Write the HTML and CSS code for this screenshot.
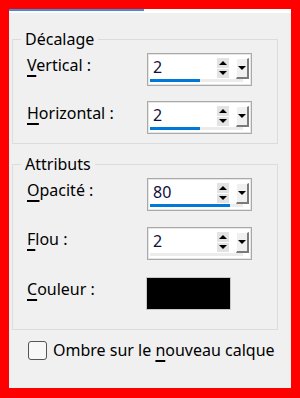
FILE: index.html
```html
<!DOCTYPE html>
<html lang="fr">
<head>
    <meta charset="UTF-8">
    <title>Ombre portée</title>
    <link rel="stylesheet" href="styles.css">
</head>
<body>
    <div class="window">
        <div class="tabline"><div class="tab-active"></div></div>

        <fieldset class="group group-offset">
            <legend>Décalage</legend>
            <div class="rows">
                <label class="row-label"><u>V</u>ertical :</label>
                <div class="spin">
                    <div class="spin-row">
                        <span class="spin-value">2</span>
                        <div class="spin-arrows">
                            <span class="arrow-btn"><span class="tri-up"></span></span>
                            <span class="arrow-btn"><span class="tri-down"></span></span>
                        </div>
                        <span class="drop-btn"><span class="tri-down"></span></span>
                    </div>
                    <div class="track"><div class="fill" style="width: 50px"></div></div>
                </div>

                <label class="row-label"><u>H</u>orizontal :</label>
                <div class="spin">
                    <div class="spin-row">
                        <span class="spin-value">2</span>
                        <div class="spin-arrows">
                            <span class="arrow-btn"><span class="tri-up"></span></span>
                            <span class="arrow-btn"><span class="tri-down"></span></span>
                        </div>
                        <span class="drop-btn"><span class="tri-down"></span></span>
                    </div>
                    <div class="track"><div class="fill" style="width: 50px"></div></div>
                </div>
            </div>
        </fieldset>

        <fieldset class="group group-attr">
            <legend>Attributs</legend>
            <div class="rows rows-attr">
                <label class="row-label"><u>O</u>pacité :</label>
                <div class="spin">
                    <div class="spin-row">
                        <span class="spin-value">80</span>
                        <div class="spin-arrows">
                            <span class="arrow-btn"><span class="tri-up"></span></span>
                            <span class="arrow-btn"><span class="tri-down"></span></span>
                        </div>
                        <span class="drop-btn"><span class="tri-down"></span></span>
                    </div>
                    <div class="track"><div class="fill" style="width: 80px"></div></div>
                </div>

                <label class="row-label"><u>F</u>lou :</label>
                <div class="spin">
                    <div class="spin-row">
                        <span class="spin-value">2</span>
                        <div class="spin-arrows">
                            <span class="arrow-btn"><span class="tri-up"></span></span>
                            <span class="arrow-btn"><span class="tri-down"></span></span>
                        </div>
                        <span class="drop-btn"><span class="tri-down"></span></span>
                    </div>
                    <div class="track"><div class="fill" style="width: 0px"></div></div>
                </div>

                <label class="row-label color-label"><u>C</u>ouleur :</label>
                <div class="swatch"></div>
            </div>
        </fieldset>

        <label class="check-row">
            <span class="checkbox"></span>
            <span>Ombre sur le <u>n</u>ouveau calque</span>
        </label>
    </div>
</body>
</html>
```

FILE: styles.css
```css
body {
    margin: 0;
    padding: 9px 9px 10px 9px;
    height: 398px;
    box-sizing: border-box;
    background-color: #ff0000;
    font-family: 'Noto Sans', 'Open Sans', sans-serif;
    font-size: 16px;
    color: #000;
}
.window {
    height: 379px;
    background-color: #f0f0f0;
    display: flex;
    flex-direction: column;
}
.tabline {
    height: 4px;
    background-color: #fff;
}
.tab-active {
    width: 135px;
    height: 2px;
    background-color: #3d8fdc;
}
u {
    text-decoration-thickness: 1.5px;
    text-underline-offset: 4px;
}
.group {
    margin: 0 13px 0 3px;
    border: 1px solid #dcdcdc;
    padding: 5px 0 9px 14px;
    min-width: 0;
}
.group-offset {
    margin-top: 17px;
}
.group-attr {
    margin-top: 11px;
    padding-bottom: 19px;
}
.group legend {
    padding: 0 4px;
    margin-left: -6px;
    line-height: 18px;
}
.rows {
    display: grid;
    grid-template-columns: 120px 105px;
    row-gap: 15px;
}
.rows-attr {
    row-gap: 16px;
}
.row-label {
    line-height: 18px;
    padding-top: 3px;
}
.spin {
    width: 105px;
    height: 33px;
    box-sizing: border-box;
    border: 1px solid #a9a9a9;
    box-shadow: inset 0 0 0 1px #e6e6e6;
    background-color: #fff;
    padding: 4px 2px 0 2px;
    display: flex;
    flex-direction: column;
}
.spin-row {
    height: 21px;
    display: flex;
    padding-left: 3px;
}
.spin-value {
    flex: 1;
    line-height: 18px;
    color: #10103a;
}
.spin-arrows {
    width: 12px;
    height: 20px;
    display: flex;
    flex-direction: column;
    gap: 1px;
    margin-right: 7px;
}
.arrow-btn {
    flex: 1;
    background-color: #e3e3e3;
    display: flex;
    align-items: center;
    justify-content: center;
}
.drop-btn {
    width: 13px;
    height: 21px;
    box-sizing: border-box;
    background-color: #f0f0f0;
    border-top: 1px solid #fff;
    border-left: 1px solid #fff;
    border-right: 2px solid #7a7a7a;
    border-bottom: 2px solid #7a7a7a;
    display: flex;
    align-items: center;
    justify-content: center;
}
.tri-up,
.tri-down {
    width: 0;
    height: 0;
    border-left: 4px solid transparent;
    border-right: 4px solid transparent;
}
.tri-up {
    border-bottom: 4px solid #000;
}
.tri-down {
    border-top: 4px solid #000;
}
.track {
    height: 3px;
    margin-right: 6px;
    background-color: #ececec;
}
.fill {
    height: 3px;
    background-color: #0078d7;
}
.color-label {
    margin-top: 1px;
}
.swatch {
    margin-top: 1px;
    margin-left: -1px;
    width: 85px;
    height: 33px;
    box-sizing: border-box;
    background-color: #000;
    border: 1px solid #c8c8c8;
}
.check-row {
    margin: 11px 0 0 19px;
    display: flex;
    align-items: flex-start;
    gap: 6px;
    line-height: 19px;
}
.checkbox {
    width: 19px;
    height: 19px;
    box-sizing: border-box;
    border: 1px solid #555;
    border-radius: 3px;
    background-color: #f7f7f7;
}
```
